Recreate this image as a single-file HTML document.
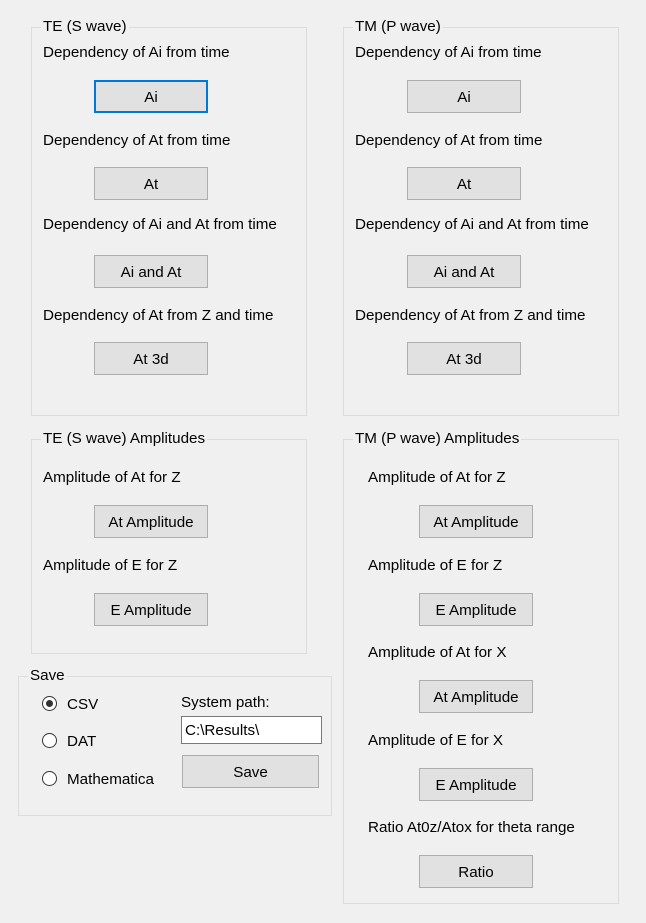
<!DOCTYPE html>
<html><head><meta charset="utf-8"><style>
*{box-sizing:border-box}
body{margin:0;width:646px;height:923px;background:#f0f0f0;font-family:"Liberation Sans",sans-serif;font-size:15.2px;color:#000;position:relative;overflow:hidden}
.g{position:absolute;border:1px solid #dcdcdc}
.gt{position:absolute;top:-10px;left:9px;background:#f0f0f0;padding:0 2px;line-height:18px;white-space:nowrap}
.l{position:absolute;line-height:18px;white-space:nowrap;margin-top:1px}
.b{position:absolute;background:#e1e1e1;border:1px solid #adadad;display:flex;align-items:center;justify-content:center;white-space:nowrap;padding-top:1px}
.f{border:2px solid #0078d7}
.r{position:absolute;width:15px;height:15px;border:1px solid #333;border-radius:50%;background:#fff}
.r.on::after{content:"";position:absolute;left:3px;top:3px;width:7px;height:7px;border-radius:50%;background:#333}
</style></head><body>
<div class="g" style="left:31px;top:27px;width:276px;height:389px"><span class="gt">TE (S wave)</span></div>
<div class="g" style="left:343px;top:27px;width:276px;height:389px"><span class="gt">TM (P wave)</span></div>
<div class="g" style="left:31px;top:439px;width:276px;height:215px"><span class="gt">TE (S wave) Amplitudes</span></div>
<div class="g" style="left:343px;top:439px;width:276px;height:465px"><span class="gt">TM (P wave) Amplitudes</span></div>
<div class="g" style="left:18px;top:676px;width:314px;height:140px"><span class="gt">Save</span></div>

<div class="l" style="left:43px;top:43px">Dependency of Ai from time</div>
<div class="b f" style="left:94px;top:80px;width:114px;height:33px">Ai</div>
<div class="l" style="left:43px;top:131px">Dependency of At from time</div>
<div class="b" style="left:94px;top:167px;width:114px;height:33px">At</div>
<div class="l" style="left:43px;top:215px">Dependency of Ai and At from time</div>
<div class="b" style="left:94px;top:255px;width:114px;height:33px">Ai and At</div>
<div class="l" style="left:43px;top:306px">Dependency of At from Z and time</div>
<div class="b" style="left:94px;top:342px;width:114px;height:33px">At 3d</div>

<div class="l" style="left:355px;top:43px">Dependency of Ai from time</div>
<div class="b" style="left:407px;top:80px;width:114px;height:33px">Ai</div>
<div class="l" style="left:355px;top:131px">Dependency of At from time</div>
<div class="b" style="left:407px;top:167px;width:114px;height:33px">At</div>
<div class="l" style="left:355px;top:215px">Dependency of Ai and At from time</div>
<div class="b" style="left:407px;top:255px;width:114px;height:33px">Ai and At</div>
<div class="l" style="left:355px;top:306px">Dependency of At from Z and time</div>
<div class="b" style="left:407px;top:342px;width:114px;height:33px">At 3d</div>

<div class="l" style="left:43px;top:468px">Amplitude of At for Z</div>
<div class="b" style="left:94px;top:505px;width:114px;height:33px">At Amplitude</div>
<div class="l" style="left:43px;top:556px">Amplitude of E for Z</div>
<div class="b" style="left:94px;top:593px;width:114px;height:33px">E Amplitude</div>

<div class="l" style="left:368px;top:468px">Amplitude of At for Z</div>
<div class="b" style="left:419px;top:505px;width:114px;height:33px">At Amplitude</div>
<div class="l" style="left:368px;top:556px">Amplitude of E for Z</div>
<div class="b" style="left:419px;top:593px;width:114px;height:33px">E Amplitude</div>
<div class="l" style="left:368px;top:643px">Amplitude of At for X</div>
<div class="b" style="left:419px;top:680px;width:114px;height:33px">At Amplitude</div>
<div class="l" style="left:368px;top:731px">Amplitude of E for X</div>
<div class="b" style="left:419px;top:768px;width:114px;height:33px">E Amplitude</div>
<div class="l" style="left:368px;top:818px">Ratio At0z/Atox for theta range</div>
<div class="b" style="left:419px;top:855px;width:114px;height:33px">Ratio</div>

<div class="r on" style="left:42px;top:696px"></div><div class="l" style="left:67px;top:695px">CSV</div>
<div class="r" style="left:42px;top:733px"></div><div class="l" style="left:67px;top:732px">DAT</div>
<div class="r" style="left:42px;top:771px"></div><div class="l" style="left:67px;top:770px">Mathematica</div>
<div class="l" style="left:181px;top:693px">System path:</div>
<div style="position:absolute;left:181px;top:716px;width:141px;height:28px;background:#fff;border:1px solid #7a7a7a;padding-left:3px;line-height:27px">C:\Results\</div>
<div class="b" style="left:182px;top:755px;width:137px;height:33px">Save</div>
</body></html>
